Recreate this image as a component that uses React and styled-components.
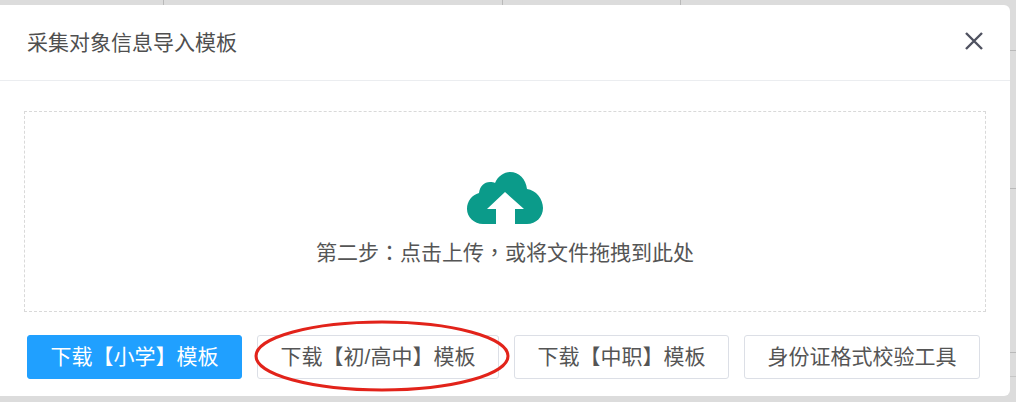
import React from "react";
import styled, { createGlobalStyle } from "styled-components";

const GlobalStyle = createGlobalStyle`
  html, body {
    margin: 0;
    height: 100%;
  }
  body {
    width: 1016px;
    height: 402px;
    overflow: hidden;
    font-family: "Liberation Sans", "Noto Sans CJK SC", sans-serif;
    background-color: #dcdcdc;
    background-image:
      linear-gradient(#b9b9b9, #b9b9b9),
      linear-gradient(#b9b9b9, #b9b9b9),
      linear-gradient(#b9b9b9, #b9b9b9),
      linear-gradient(#b9b9b9, #b9b9b9),
      linear-gradient(#b9b9b9, #b9b9b9),
      linear-gradient(#b9b9b9, #b9b9b9),
      linear-gradient(#c6c6c6, #c6c6c6);
    background-repeat: no-repeat;
    background-size: 1px 5px, 1px 5px, 1px 5px, 6px 1px, 6px 1px, 6px 1px, 6px 1px;
    background-position: 163px 0, 502px 0, 680px 0, 1010px 50px, 1010px 188px, 1010px 352px, 1010px 376px;
  }
`;

const Dialog = styled.div`
  box-sizing: border-box;
  width: 1010px;
  height: 391px;
  margin-top: 5px;
  background: #fff;
  border-radius: 0 6px 6px 0;
  display: flex;
  flex-direction: column;
`;

const Header = styled.div`
  box-sizing: border-box;
  height: 76px;
  flex: none;
  padding: 0 26px 0 27px;
  border-bottom: 1px solid #ebedf0;
  display: flex;
  align-items: center;
  justify-content: space-between;
`;

const Title = styled.h3`
  margin: 0;
  font-size: 21px;
  line-height: 28px;
  font-weight: 400;
  color: #4f4f4f;
`;

const CloseButton = styled.button`
  width: 20px;
  height: 20px;
  margin-bottom: 3px;
  padding: 0;
  border: 0;
  background: none;
  display: flex;
`;

const Body = styled.div`
  flex: 1;
  padding: 30px 24px 0;
`;

const DropZone = styled.div`
  box-sizing: border-box;
  width: 962px;
  height: 201px;
  border: 1px dashed #d9d9d9;
  display: flex;
  flex-direction: column;
  align-items: center;
  padding-top: 60px;
`;

const UploadText = styled.p`
  margin: 15px 0 0;
  font-family: "Liberation Sans", "Noto Sans CJK TC", sans-serif;
  font-size: 21px;
  line-height: 28px;
  color: #555;
`;

const Footer = styled.div`
  display: flex;
  gap: 15px;
  padding: 23px 0 0 3px;
`;

const DownloadButton = styled.button`
  position: relative;
  box-sizing: border-box;
  width: ${(p) => p.$width}px;
  height: 44px;
  padding: 0 0 4px;
  font-family: inherit;
  font-size: 21px;
  border-radius: 3px;
  border: 1px solid ${(p) => (p.$primary ? "#20a0ff" : "#dcdfe6")};
  background: ${(p) => (p.$primary ? "#20a0ff" : "#fff")};
  color: ${(p) => (p.$primary ? "#fff" : "#555")};
`;

const Circle = styled.svg`
  position: absolute;
  left: -5px;
  top: -17px;
  width: 258px;
  height: 74px;
  overflow: visible;
  pointer-events: none;
`;

function CloseIcon() {
  return (
    <svg width="20" height="20" viewBox="0 0 20 20" fill="none">
      <path d="M2 2 L18 18 M18 2 L2 18" stroke="#4f5260" strokeWidth="2.4" />
    </svg>
  );
}

function CloudIcon() {
  return (
    <svg width="76" height="52" viewBox="0 0 76 52">
      <path
        fill="#0b9b8a"
        d="M29 52 H16 C7 52 0 45 0 37 C0 29 5 23 12 21 C13 14 17 10 23 10 C25 10 27 10 28 11 C31 4 37 0 43 0 C52 0 59 7 60 17 C69 18 76 27 76 36 C76 45 69 52 60 52 H48 V37 H57 L38 20 L20 37 H29 Z"
      />
    </svg>
  );
}

export default function App() {
  return (
    <>
      <GlobalStyle />
      <Dialog>
        <Header>
          <Title>采集对象信息导入模板</Title>
          <CloseButton aria-label="关闭">
            <CloseIcon />
          </CloseButton>
        </Header>
        <Body>
          <DropZone>
            <CloudIcon />
            <UploadText>第二步：点击上传，或将文件拖拽到此处</UploadText>
          </DropZone>
          <Footer>
            <DownloadButton $primary $width={215}>下载【小学】模板</DownloadButton>
            <DownloadButton $width={242}>
              下载【初/高中】模板
              <Circle viewBox="0 0 258 74">
                <ellipse cx="129" cy="37" rx="126" ry="34" fill="none" stroke="#e2231a" strokeWidth="3" />
              </Circle>
            </DownloadButton>
            <DownloadButton $width={215}>下载【中职】模板</DownloadButton>
            <DownloadButton $width={236}>身份证格式校验工具</DownloadButton>
          </Footer>
        </Body>
      </Dialog>
    </>
  );
}
